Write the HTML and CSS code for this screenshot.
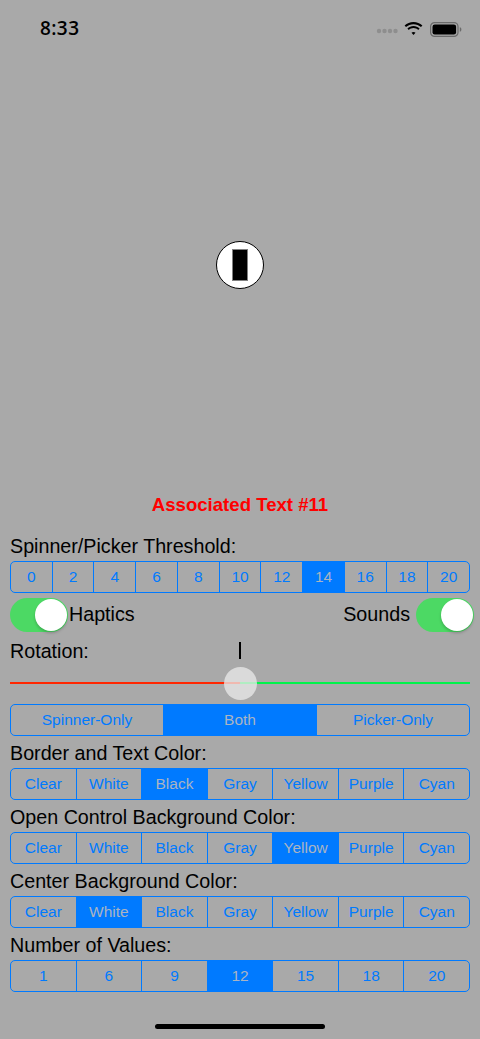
FILE: index.html
```html
<!DOCTYPE html>
<html>
<head>
<meta charset="utf-8">
<link rel="stylesheet" href="styles.css">
</head>
<body>
<div class="screen">
  <div class="status">
    <span class="time">8:33</span>
    <div class="status-icons">
      <svg class="dots" width="22" height="6" viewBox="0 0 22 6"><circle cx="3" cy="3" r="2.2" fill="#8e8e8e"/><circle cx="8.5" cy="3" r="2.2" fill="#8e8e8e"/><circle cx="14" cy="3" r="2.2" fill="#8e8e8e"/><circle cx="19.5" cy="3" r="2.2" fill="#8e8e8e"/></svg>
      <svg class="wifi" width="19" height="14" viewBox="0 0 19 14"><path d="M9.5 2.2c2.9 0 5.5 1.1 7.5 2.9l1.4-1.5C16 1.4 12.9 0 9.5 0S3 1.4.6 3.6L2 5.1c2-1.8 4.6-2.9 7.5-2.9z" fill="#000"/><path d="M9.5 6.1c1.8 0 3.4.7 4.7 1.8l1.4-1.5C14 5 11.8 4 9.5 4S5 5 3.4 6.4l1.4 1.5C6.1 6.8 7.7 6.1 9.5 6.1z" fill="#000"/><path d="M9.5 9.9c.8 0 1.5.3 2 .8L9.5 13 7.5 10.7c.5-.5 1.2-.8 2-.8z" fill="#000"/></svg>
      <svg class="battery" width="32" height="15" viewBox="0 0 32 15"><rect x="0.6" y="0.6" width="27.4" height="13.8" rx="4" fill="none" stroke="#6a6a6a" stroke-width="1.2"/><rect x="2.5" y="2.5" width="23.6" height="10" rx="2.2" fill="#000"/><path d="M29.8 5.2c1 .3 1.6 1.2 1.6 2.3s-.6 2-1.6 2.3z" fill="#6a6a6a"/></svg>
    </div>
  </div>

  <div class="stage">
    <div class="knob"><div class="knob-bar"></div></div>
  </div>

  <div class="assoc">Associated Text #11</div>

  <div class="controls">
    <div class="label first">Spinner/Picker Threshold:</div>
    <div class="seg">
      <div class="item">0</div><div class="item">2</div><div class="item">4</div><div class="item">6</div><div class="item">8</div><div class="item">10</div><div class="item">12</div><div class="item on">14</div><div class="item">16</div><div class="item">18</div><div class="item">20</div>
    </div>

    <div class="switch-row">
      <div class="switch-group">
        <div class="switch"><div class="switch-knob"></div></div>
        <span class="switch-label">Haptics</span>
      </div>
      <div class="switch-group">
        <span class="switch-label right">Sounds</span>
        <div class="switch"><div class="switch-knob"></div></div>
      </div>
    </div>

    <div class="rotation-row">
      <span class="rot-label">Rotation:</span>
      <span class="tick"></span>
      <span></span>
    </div>

    <div class="slider">
      <div class="track">
        <div class="track-min"></div>
        <div class="track-max"></div>
        <div class="thumb"></div>
      </div>
    </div>

    <div class="seg seg-mode">
      <div class="item">Spinner-Only</div><div class="item on">Both</div><div class="item">Picker-Only</div>
    </div>

    <div class="label">Border and Text Color:</div>
    <div class="seg">
      <div class="item">Clear</div><div class="item">White</div><div class="item on">Black</div><div class="item">Gray</div><div class="item">Yellow</div><div class="item">Purple</div><div class="item">Cyan</div>
    </div>

    <div class="label">Open Control Background Color:</div>
    <div class="seg">
      <div class="item">Clear</div><div class="item">White</div><div class="item">Black</div><div class="item">Gray</div><div class="item on">Yellow</div><div class="item">Purple</div><div class="item">Cyan</div>
    </div>

    <div class="label">Center Background Color:</div>
    <div class="seg">
      <div class="item">Clear</div><div class="item on">White</div><div class="item">Black</div><div class="item">Gray</div><div class="item">Yellow</div><div class="item">Purple</div><div class="item">Cyan</div>
    </div>

    <div class="label">Number of Values:</div>
    <div class="seg">
      <div class="item">1</div><div class="item">6</div><div class="item">9</div><div class="item on">12</div><div class="item">15</div><div class="item">18</div><div class="item">20</div>
    </div>
  </div>

  <div class="home-bar"></div>
</div>
</body>
</html>
```

FILE: styles.css
```css
* { box-sizing: border-box; }

html, body {
  margin: 0;
  padding: 0;
  background: #a9a9a9;
}

body {
  font-family: "Liberation Sans", Arial, sans-serif;
  color: #000;
}

.screen {
  width: 480px;
  height: 1039px;
  display: flex;
  flex-direction: column;
  overflow: hidden;
}

.status {
  height: 50px;
  display: flex;
  align-items: center;
  justify-content: space-between;
  padding: 6px 18px 0 40px;
}

.time {
  font-size: 19px;
  font-weight: 600;
  letter-spacing: 0.4px;
  font-family: "Open Sans", "Liberation Sans", sans-serif;
}

.status-icons {
  display: flex;
  align-items: center;
  gap: 6px;
  margin-top: 2px;
}

.dots { margin-top: 3px; }
.wifi { margin-right: 1px; }

.stage {
  height: 440px;
  display: flex;
  justify-content: center;
  padding-top: 191px;
}

.knob {
  width: 48px;
  height: 48px;
  border-radius: 50%;
  background: #fff;
  border: 1.5px solid #000;
  display: flex;
  align-items: center;
  justify-content: center;
}

.knob-bar {
  width: 16px;
  height: 32px;
  background: #000;
  border: 1.5px solid #808080;
}

.assoc {
  height: 30px;
  line-height: 30px;
  text-align: center;
  color: #ff0000;
  font-weight: 700;
  font-size: 18.6px;
}

.controls {
  padding: 0 10px;
  display: flex;
  flex-direction: column;
}

.label {
  height: 32px;
  line-height: 32px;
  font-size: 19.7px;
  padding-top: 1px;
  white-space: nowrap;
}

.label.first {
  margin-top: 9px;
}

.seg {
  height: 32px;
  display: flex;
  border: 1px solid #007aff;
  border-radius: 5px;
  overflow: hidden;
}

.item {
  flex: 1 1 0;
  display: flex;
  align-items: center;
  justify-content: center;
  color: #007aff;
  font-size: 15.5px;
  border-left: 1px solid #007aff;
}

.item:first-child { border-left: none; }

.item.on {
  background: #007aff;
  color: #aab4c2;
}

.switch-row {
  height: 35px;
  margin-top: 4px;
  margin-right: -4px;
  display: flex;
  justify-content: space-between;
  align-items: center;
}

.switch-group {
  display: flex;
  align-items: center;
}

.switch {
  width: 58px;
  height: 34px;
  border-radius: 17px;
  background: #4cd964;
  display: flex;
  justify-content: flex-end;
  align-items: center;
  padding: 1px;
}

.switch-knob {
  width: 32px;
  height: 32px;
  border-radius: 50%;
  background: #fff;
  box-shadow: 0 2px 3px rgba(0,0,0,0.2);
}

.switch-label {
  font-size: 19.7px;
  margin-left: 1px;
}

.switch-label.right {
  margin-left: 0;
  margin-right: 6px;
}

.rotation-row {
  height: 32px;
  margin-top: 2px;
  display: grid;
  grid-template-columns: 1fr auto 1fr;
  align-items: center;
}

.rot-label {
  font-size: 19.7px;
  padding-top: 2px;
}

.tick {
  width: 1.5px;
  height: 17px;
  background: #000;
}

.slider {
  height: 32px;
  margin-top: 1px;
  display: flex;
  align-items: center;
}

.track {
  position: relative;
  flex: 1;
  height: 2px;
  display: flex;
}

.track-min { flex: 1; background: #ff2600; }
.track-max { flex: 1; background: #00f34a; }

.thumb {
  position: absolute;
  left: 50%;
  top: 50%;
  width: 33px;
  height: 33px;
  margin-left: -16.5px;
  margin-top: -16.5px;
  border-radius: 50%;
  background: rgba(235,235,235,0.75);
}

.seg-mode {
  margin-top: 5px;
}

.home-bar {
  width: 170px;
  height: 5px;
  border-radius: 3px;
  background: #000;
  margin: auto auto 10px;
}
```
